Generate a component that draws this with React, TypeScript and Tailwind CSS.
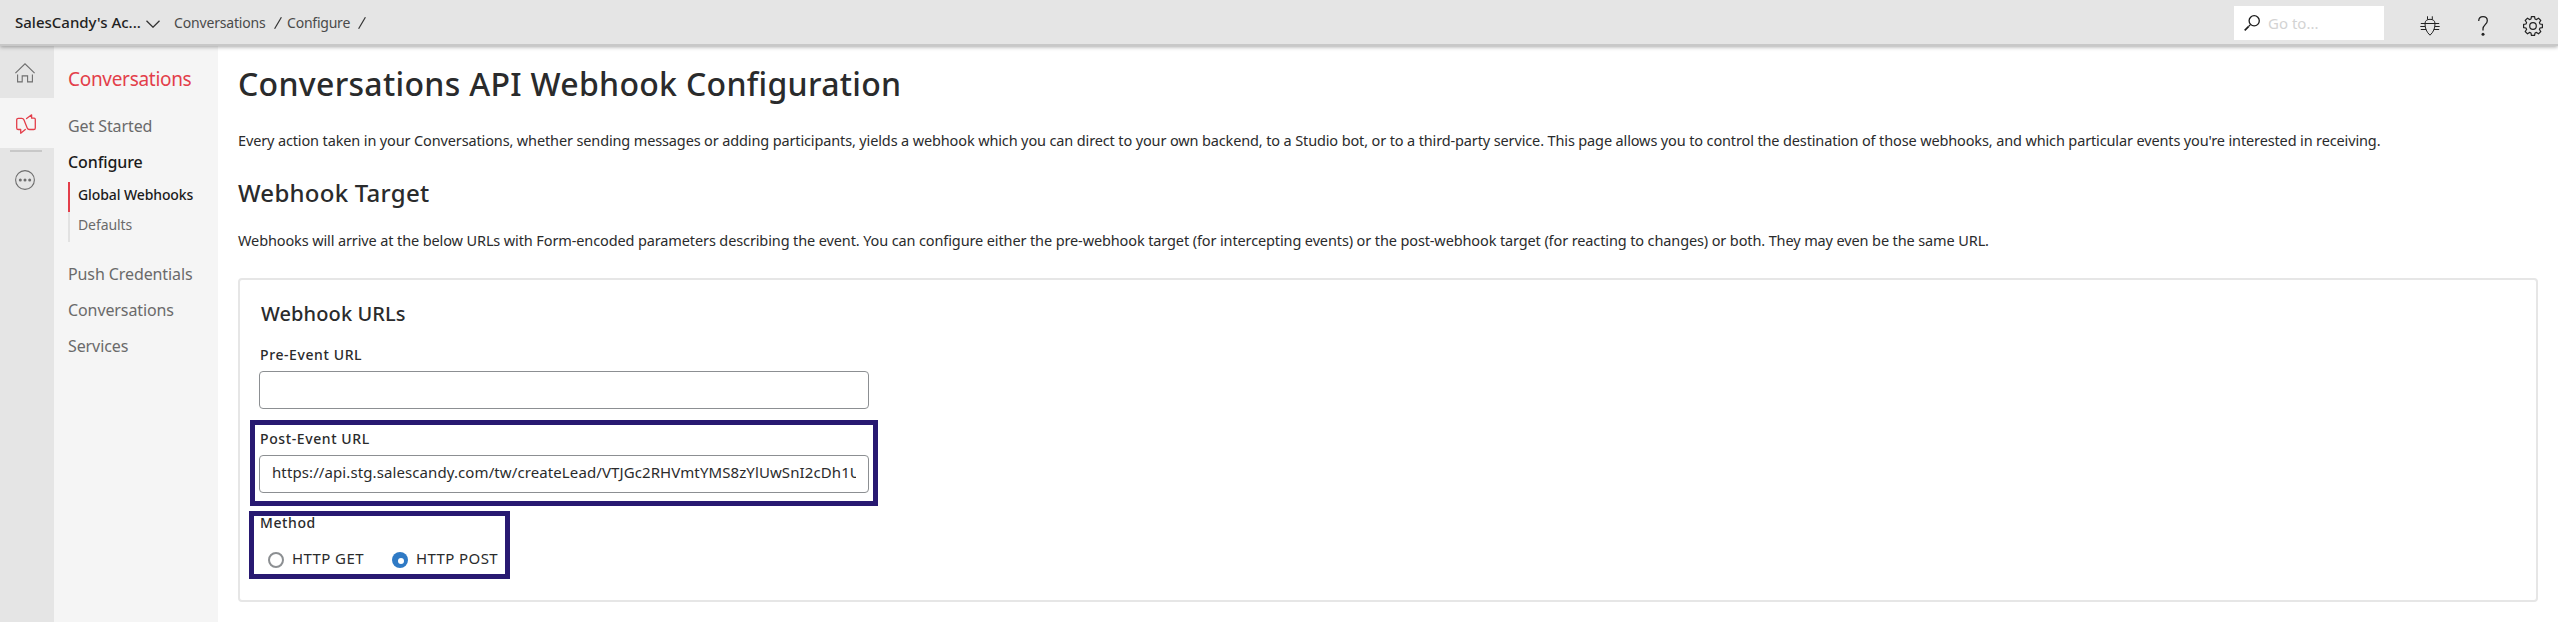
import { useState } from 'react';
import clsx from 'clsx';

const navItems = [
  { label: 'Get Started' },
  { label: 'Configure', children: ['Global Webhooks', 'Defaults'] },
  { label: 'Push Credentials' },
  { label: 'Conversations' },
  { label: 'Services' },
];

const methods = ['HTTP GET', 'HTTP POST'];

function HomeIcon() {
  return (
    <svg className="h-5 w-5" viewBox="0 0 20 20" fill="none" stroke="#6e6e6e" strokeWidth="1.1">
      <path d="M.4 10.2 10 .8l9.600 9.400" />
      <path d="M2.600 11.500v7.400h4.600v-6h5.400v6h4.800v-7.400" />
    </svg>
  );
}

function ConversationsIcon() {
  return (
    <svg className="h-5 w-5" viewBox="0 0 20 20" fill="none" stroke="#e33e4a" strokeWidth="1.3" strokeLinejoin="round" strokeLinecap="round">
      <path d="M9.3 15.5 4.7 19.2v-3.7H2.3A1.6 1.6 0 0 1 .7 13.900V5.900a1.600 1.600 0 0 1 1.600-1.600h3.500c1.100 0 1.700.5 2.100 1.500l3.300 8.200c.4 1 1.100 1.500 2.200 1.500h4.300a1.600 1.600 0 0 0 1.600-1.600V5.400a1.200 1.200 0 0 0-1.200-1.200h-2.500V.8l-5 3.700" />
    </svg>
  );
}

function MoreIcon() {
  return (
    <svg className="h-5 w-5" viewBox="0 0 20 20">
      <circle cx="10" cy="10" r="9.400" fill="none" stroke="#6e6e6e" strokeWidth="1.1" />
      <circle cx="5.300" cy="10" r="1.500" fill="#6e6e6e" />
      <circle cx="10" cy="10" r="1.500" fill="#6e6e6e" />
      <circle cx="14.700" cy="10" r="1.500" fill="#6e6e6e" />
    </svg>
  );
}

function SearchIcon() {
  return (
    <svg className="h-4 w-4" viewBox="0 0 16 16" fill="none" stroke="#1b1b1b">
      <circle cx="10.200" cy="5.800" r="5.100" strokeWidth="1.300" />
      <path d="M6.400 9.600 4.700 11.300" strokeWidth="1.200" />
      <path d="M4.700 11.300.7 15.300" strokeWidth="1.700" />
    </svg>
  );
}

function BugIcon() {
  return (
    <svg className="h-5 w-5" viewBox="0 0 20 20" fill="none" stroke="#222" strokeWidth="1">
      <path d="M7.500.3v3.200M12.300.3v3.200" />
      <path d="M5 7.500C5 4.800 7 3.300 10 3.300s5 1.500 5 4.200c0 5-1.500 8.500-5 11.700-3.500-3.200-5-6.700-5-11.700Z" />
      <path d="M.8 7.500h18.400M.3 10.500h4.900M14.800 10.500h4.900M.8 13.500h5.400M13.800 13.500h5.400" />
    </svg>
  );
}

function HelpIcon() {
  return (
    <svg className="h-5 w-[10px]" viewBox="0 0 10 20" fill="none" stroke="#222" strokeWidth="1.300">
      <path d="M.7 4.900C.8 2.200 2.500.7 5 .7s4.300 1.600 4.300 4c0 3.700-4.300 4.200-4.300 8v1.800" />
      <circle cx="5" cy="18.200" r="1.500" fill="#222" stroke="none" />
    </svg>
  );
}

function GearIcon() {
  return (
    <svg className="h-5 w-5" viewBox="0 0 20 20" fill="none" stroke="#222" strokeWidth="1.200" strokeLinejoin="round">
      <circle cx="10" cy="10" r="3.300" />
      <path d="M8.400.6h3.200l.4 2.400 1.500.6 2-1.400 2.300 2.300-1.400 2 .6 1.500 2.400.4v3.200l-2.400.4-.6 1.500 1.400 2-2.300 2.300-2-1.400-1.500.6-.4 2.400H8.400L8 17l-1.500-.6-2 1.400-2.300-2.300 1.400-2L3 12l-2.400-.4V8.400L3 8l.6-1.500-1.400-2 2.300-2.300 2 1.400L8 3z" />
    </svg>
  );
}

function Header() {
  return (
    <header className="z-10 flex h-[46px] shrink-0 items-center border-b-2 border-[#c8c8c8] bg-[#e5e5e5] shadow-[0_1px_4px_rgba(0,0,0,0.35)]">
      <button className="ml-[15px] flex items-center text-[15px] font-medium text-[#222]">
        <span className="w-[131px] text-left">SalesCandy's Ac...</span>
        <svg className="mt-1 h-2 w-[14px]" viewBox="0 0 14 8" fill="none" stroke="#333" strokeWidth="1.300">
          <path d="M.5.7 7 7.200 13.500.7" />
        </svg>
      </button>
      <nav className="mt-[2px] ml-[14px] flex items-center text-sm text-[#4a4a4a]">
        <a className="w-[100px] tracking-[-0.17px]">Conversations</a>
        <svg className="h-3 w-2" viewBox="0 0 8 12" stroke="#333" strokeWidth="1.200"><path d="M.6 11.700 7.400.3" /></svg>
        <a className="ml-[5px] w-[71px] tracking-[-0.22px]">Configure</a>
        <svg className="h-3 w-2" viewBox="0 0 8 12" stroke="#333" strokeWidth="1.200"><path d="M.6 11.700 7.400.3" /></svg>
      </nav>
      <div className="mt-[2px] mr-9 ml-auto flex h-[34px] w-[150px] items-center bg-white pl-[10px]">
        <SearchIcon />
        <input
          className="ml-2 w-[100px] text-[15px] outline-none placeholder:text-[#d3d3d3]"
          placeholder="Go to..."
        />
      </div>
      <div className="mt-2 mr-[15px] flex items-center">
        <BugIcon />
        <div className="mr-[35px] ml-[38px]"><HelpIcon /></div>
        <GearIcon />
      </div>
    </header>
  );
}

function Rail() {
  return (
    <aside className="flex w-[54px] shrink-0 flex-col bg-[#e5e5e5]">
      <div className="h-[52px] pt-[17px] pl-[15px]"><HomeIcon /></div>
      <div className="h-[50px] bg-[#f5f5f5] pt-4 pl-4"><ConversationsIcon /></div>
      <hr className="mt-[2px] ml-[10px] h-[2px] w-8 border-0 bg-[#c8c8c8]" />
      <div className="mt-[18px] pl-[15px]"><MoreIcon /></div>
    </aside>
  );
}

function SideNav() {
  return (
    <nav className="w-[164px] shrink-0 bg-[#f5f5f5] pt-[19px] pl-[14px]">
      <h2 className="mb-[15px] text-[19px] leading-7 tracking-[-0.3px] text-[#e33e4a]">Conversations</h2>
      <ul className="text-base leading-9 tracking-[-0.1px] text-[#6a6a6a]">
        {navItems.map((item) => (
          <li key={item.label}>
            <a className={clsx(item.children && 'font-medium text-[#1b1b1b]')}>{item.label}</a>
            {item.children && (
              <ul className="mt-[2px] mb-[14px] text-sm leading-[26px]">
                {item.children.map((child, i) => (
                  <li
                    key={child}
                    className={clsx(
                      'border-l-2 pb-1 pl-2',
                      i === 0 ? 'border-[#e33e4a] font-medium text-[#1b1b1b]' : 'border-[#e2e2e2]'
                    )}
                  >
                    {child}
                  </li>
                ))}
              </ul>
            )}
          </li>
        ))}
      </ul>
    </nav>
  );
}

function WebhookCard() {
  const [preUrl, setPreUrl] = useState('');
  const [postUrl, setPostUrl] = useState(
    'https://api.stg.salescandy.com/tw/createLead/VTJGc2RHVmtYMS8zYlUwSnI2cDh1U'
  );
  const [method, setMethod] = useState('HTTP POST');

  return (
    <section className="relative mt-[26px] h-[324px] rounded border-2 border-[#e6e6e6] pt-5 pl-[19px]">
      <h3 className="pl-[2px] text-xl leading-7 font-medium tracking-[0.1px]">Webhook URLs</h3>

      <label className="mt-[17px] block pl-px text-sm leading-5 font-medium tracking-[0.6px]">Pre-Event URL</label>
      <input
        className="mt-[6px] block h-[38px] w-[610px] rounded border border-[#8c8f92] px-3 text-[15px] outline-none"
        value={preUrl}
        onChange={(e) => setPreUrl(e.target.value)}
      />

      <label className="mt-5 block pl-px text-sm leading-5 font-medium tracking-[0.6px]">Post-Event URL</label>
      <input
        className="mt-[6px] block h-[38px] w-[610px] rounded border border-[#8c8f92] px-3 pb-[5px] text-[15px] tracking-[0.1px] outline-none"
        value={postUrl}
        onChange={(e) => setPostUrl(e.target.value)}
      />

      <label className="mt-5 block pl-px text-sm leading-5 font-medium tracking-[0.6px]">Method</label>
      <div className="mt-[15px] flex pl-[9px]">
        {methods.map((m) => (
          <div key={m} className="flex h-5 w-[124px] items-center gap-2" onClick={() => setMethod(m)}>
            <span
              className={clsx(
                'mt-1 flex h-4 w-4 items-center justify-center rounded-full',
                method === m ? 'bg-[#2f7ac5]' : 'border-2 border-[#8c8f92] bg-white'
              )}
            >
              {method === m && <span className="mt-[2px] ml-[2px] h-[6px] w-[6px] rounded-full bg-white" />}
            </span>
            <span className="text-[15px] leading-5 tracking-[0.4px]">{m}</span>
          </div>
        ))}
      </div>

      {/* Highlight frames */}
      <div className="pointer-events-none absolute top-[140px] left-[10px] h-[86px] w-[628px] border-[5px] border-[#281971]" />
      <div className="pointer-events-none absolute top-[231px] left-[9px] h-[68px] w-[261px] border-[5px] border-[#281971]" />
    </section>
  );
}

export default function App() {
  return (
    <div className="flex h-screen flex-col overflow-hidden bg-white font-['Noto_Sans',sans-serif] text-[#2a2b2c]">
      <Header />
      <div className="flex flex-1">
        <Rail />
        <SideNav />
        <main className="flex-1 px-5 pt-4">
          <h1 className="text-[32px] leading-[44px] font-medium tracking-[0.3px]">
            Conversations API Webhook Configuration
          </h1>
          <p className="mt-[22px] text-[14.5px] leading-6 tracking-[-0.135px] whitespace-nowrap">
            Every action taken in your Conversations, whether sending messages or adding participants, yields a webhook which you can direct to your own backend, to a Studio bot, or to a third-party service. This page allows you to control the destination of those webhooks, and which particular events you're interested in receiving.
          </p>
          <h2 className="mt-[25px] text-2xl leading-8 font-medium tracking-[0.25px]">Webhook Target</h2>
          <p className="mt-[19px] text-[14.5px] leading-6 tracking-[-0.12px] whitespace-nowrap">
            Webhooks will arrive at the below URLs with Form-encoded parameters describing the event. You can configure either the pre-webhook target (for intercepting events) or the post-webhook target (for reacting to changes) or both. They may even be the same URL.
          </p>
          <WebhookCard />
        </main>
      </div>
    </div>
  );
}
